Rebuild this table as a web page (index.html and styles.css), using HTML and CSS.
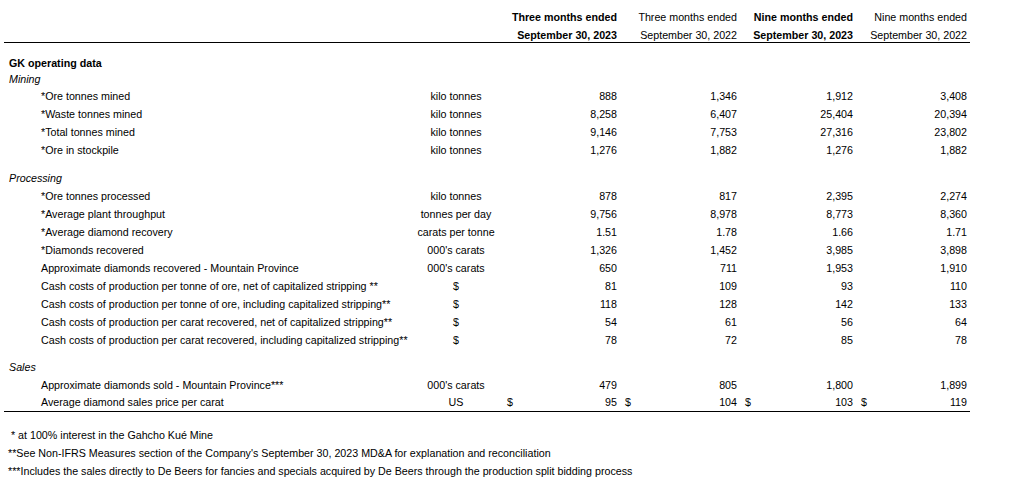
FILE: index.html
```html
<!DOCTYPE html>
<html lang="en">
<head>
<meta charset="utf-8">
<title>GK operating data</title>
<link rel="stylesheet" href="styles.css">
</head>
<body>
<div class="sheet">
  <div class="row head1">
    <div class="lbl"></div><div class="unit"></div>
    <div class="hc b">Three months ended</div>
    <div class="hc">Three months ended</div>
    <div class="hc b">Nine months ended</div>
    <div class="hc">Nine months ended</div>
  </div>
  <div class="row head2">
    <div class="lbl"></div><div class="unit"></div>
    <div class="hc b">September 30, 2023</div>
    <div class="hc">September 30, 2022</div>
    <div class="hc b">September 30, 2023</div>
    <div class="hc">September 30, 2022</div>
  </div>

  <div class="gap g1"></div>
  <div class="row sec title"><div class="lbl b">GK operating data</div></div>
  <div class="row sec sub"><div class="lbl i">Mining</div></div>

  <div class="row"><div class="lbl item">*Ore tonnes mined</div><div class="unit">kilo tonnes</div>
    <div class="num c1"><span></span><span>888</span></div><div class="num"><span></span><span>1,346</span></div><div class="num"><span></span><span>1,912</span></div><div class="num"><span></span><span>3,408</span></div></div>
  <div class="row"><div class="lbl item">*Waste tonnes mined</div><div class="unit">kilo tonnes</div>
    <div class="num c1"><span></span><span>8,258</span></div><div class="num"><span></span><span>6,407</span></div><div class="num"><span></span><span>25,404</span></div><div class="num"><span></span><span>20,394</span></div></div>
  <div class="row"><div class="lbl item">*Total tonnes mined</div><div class="unit">kilo tonnes</div>
    <div class="num c1"><span></span><span>9,146</span></div><div class="num"><span></span><span>7,753</span></div><div class="num"><span></span><span>27,316</span></div><div class="num"><span></span><span>23,802</span></div></div>
  <div class="row"><div class="lbl item">*Ore in stockpile</div><div class="unit">kilo tonnes</div>
    <div class="num c1"><span></span><span>1,276</span></div><div class="num"><span></span><span>1,882</span></div><div class="num"><span></span><span>1,276</span></div><div class="num"><span></span><span>1,882</span></div></div>

  <div class="gap g2"></div>
  <div class="row"><div class="lbl i">Processing</div></div>
  <div class="row"><div class="lbl item">*Ore tonnes processed</div><div class="unit">kilo tonnes</div>
    <div class="num c1"><span></span><span>878</span></div><div class="num"><span></span><span>817</span></div><div class="num"><span></span><span>2,395</span></div><div class="num"><span></span><span>2,274</span></div></div>
  <div class="row"><div class="lbl item">*Average plant throughput</div><div class="unit">tonnes per day</div>
    <div class="num c1"><span></span><span>9,756</span></div><div class="num"><span></span><span>8,978</span></div><div class="num"><span></span><span>8,773</span></div><div class="num"><span></span><span>8,360</span></div></div>
  <div class="row"><div class="lbl item">*Average diamond recovery</div><div class="unit">carats per tonne</div>
    <div class="num c1"><span></span><span>1.51</span></div><div class="num"><span></span><span>1.78</span></div><div class="num"><span></span><span>1.66</span></div><div class="num"><span></span><span>1.71</span></div></div>
  <div class="row"><div class="lbl item">*Diamonds recovered</div><div class="unit">000's carats</div>
    <div class="num c1"><span></span><span>1,326</span></div><div class="num"><span></span><span>1,452</span></div><div class="num"><span></span><span>3,985</span></div><div class="num"><span></span><span>3,898</span></div></div>
  <div class="row"><div class="lbl item">Approximate diamonds recovered - Mountain Province</div><div class="unit">000's carats</div>
    <div class="num c1"><span></span><span>650</span></div><div class="num"><span></span><span>711</span></div><div class="num"><span></span><span>1,953</span></div><div class="num"><span></span><span>1,910</span></div></div>
  <div class="row"><div class="lbl item">Cash costs of production per tonne of ore, net of capitalized stripping **</div><div class="unit">$</div>
    <div class="num c1"><span></span><span>81</span></div><div class="num"><span></span><span>109</span></div><div class="num"><span></span><span>93</span></div><div class="num"><span></span><span>110</span></div></div>
  <div class="row"><div class="lbl item">Cash costs of production per tonne of ore, including capitalized stripping**</div><div class="unit">$</div>
    <div class="num c1"><span></span><span>118</span></div><div class="num"><span></span><span>128</span></div><div class="num"><span></span><span>142</span></div><div class="num"><span></span><span>133</span></div></div>
  <div class="row"><div class="lbl item">Cash costs of production per carat recovered, net of capitalized stripping**</div><div class="unit">$</div>
    <div class="num c1"><span></span><span>54</span></div><div class="num"><span></span><span>61</span></div><div class="num"><span></span><span>56</span></div><div class="num"><span></span><span>64</span></div></div>
  <div class="row"><div class="lbl item">Cash costs of production per carat recovered, including capitalized stripping**</div><div class="unit">$</div>
    <div class="num c1"><span></span><span>78</span></div><div class="num"><span></span><span>72</span></div><div class="num"><span></span><span>85</span></div><div class="num"><span></span><span>78</span></div></div>

  <div class="gap g3"></div>
  <div class="row"><div class="lbl i">Sales</div></div>
  <div class="row"><div class="lbl item">Approximate diamonds sold - Mountain Province***</div><div class="unit">000's carats</div>
    <div class="num c1"><span></span><span>479</span></div><div class="num"><span></span><span>805</span></div><div class="num"><span></span><span>1,800</span></div><div class="num"><span></span><span>1,899</span></div></div>
  <div class="row last"><div class="lbl item">Average diamond sales price per carat</div><div class="unit">US</div>
    <div class="num c1"><span>$</span><span>95</span></div><div class="num"><span>$</span><span>104</span></div><div class="num"><span>$</span><span>103</span></div><div class="num"><span>$</span><span>119</span></div></div>

  <div class="notes">
    <p>&nbsp;* at 100% interest in the Gahcho Kué Mine</p>
    <p>**See Non-IFRS Measures section of the Company's September 30, 2023 MD&amp;A for explanation and reconciliation</p>
    <p>***Includes the sales directly to De Beers for fancies and specials acquired by De Beers through the production split bidding process</p>
  </div>
</div>
</body>
</html>
```
FILE: styles.css
```css
html, body {
  margin: 0;
  padding: 0;
  background: #ffffff;
}
body {
  font-family: "Liberation Sans", Arial, sans-serif;
  font-size: 10.7px;
  color: #000;
}
.sheet {
  margin-left: 4px;
  padding-top: 8px;
  width: 966px;
}
.row {
  display: grid;
  grid-template-columns: 411px 82px 123px 120px 116px 114px;
  height: 18px;
  line-height: 18px;
  white-space: nowrap;
}
.head2 {
  height: 16px;
  line-height: 18px;
  border-bottom: 1px solid #000;
}
.hc {
  text-align: right;
  padding-right: 3px;
}
.b { font-weight: bold; }
.i { font-style: italic; }
.lbl {
  padding-left: 5px;
  overflow: visible;
}
.lbl.item { padding-left: 37px; }
.sec.title { height: 15px; line-height: 17px; }
.sec.sub { height: 17px; }
.unit { text-align: center; }
.num {
  display: flex;
  justify-content: space-between;
  padding-left: 5px;
  padding-right: 3px;
}
.num.c1 { padding-left: 10px; }
.gap.g1 { height: 12px; }
.gap.g2 { height: 10px; }
.gap.g3 { height: 9px; }
.row.last {
  height: 17px;
  line-height: 17px;
  border-bottom: 1px solid #000;
}
.notes {
  padding-top: 14px;
  padding-left: 4px;
}
.notes p {
  margin: 0;
  height: 18px;
  line-height: 18px;
  white-space: nowrap;
}
```
